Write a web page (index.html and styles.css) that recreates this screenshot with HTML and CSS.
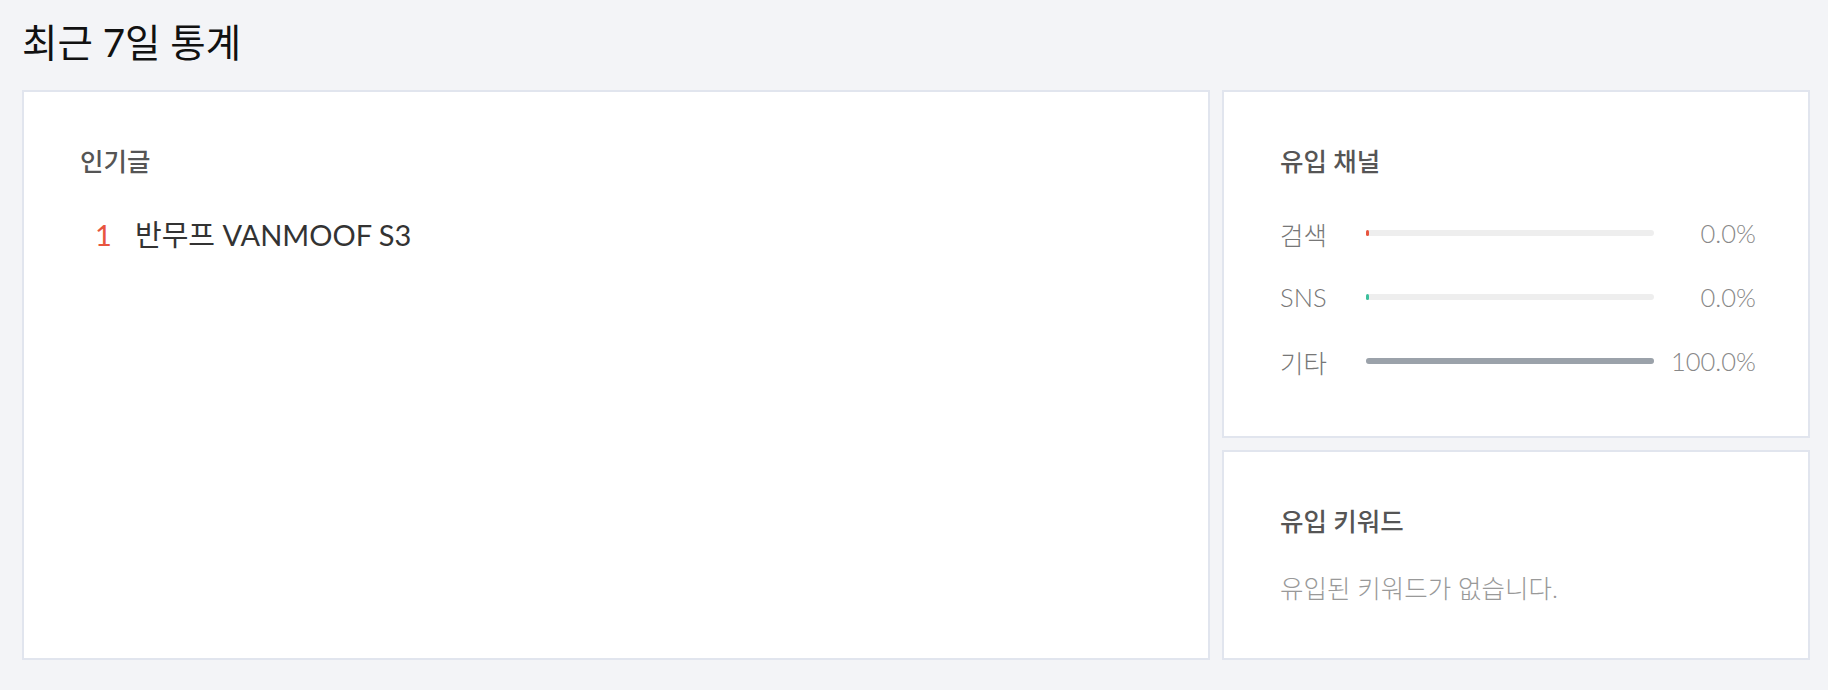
FILE: index.html
```html
<!DOCTYPE html>
<html lang="ko">
<head>
    <meta charset="UTF-8">
    <meta name="viewport" content="width=device-width, initial-scale=1.0">
    <title>최근 7일 통계</title>
    <link rel="stylesheet" href="styles.css">
</head>
<body>

<h1 class="page-title">최근 7일 통계</h1>

<div class="stats">
    <div class="card card-popular">
        <h2 class="card-title">인기글</h2>
        <ol class="popular-list">
            <li><span class="rank">1</span><span class="post">반무프 VANMOOF S3</span></li>
        </ol>
    </div>

    <div class="side">
        <div class="card">
            <h2 class="card-title">유입 채널</h2>
            <div class="channels">
                <div class="channel">
                    <span class="channel-name">검색</span>
                    <div class="bar"><div class="bar-fill fill-search" style="width: 0%"></div></div>
                    <span class="channel-value">0.0%</span>
                </div>
                <div class="channel">
                    <span class="channel-name">SNS</span>
                    <div class="bar"><div class="bar-fill fill-sns" style="width: 0%"></div></div>
                    <span class="channel-value">0.0%</span>
                </div>
                <div class="channel">
                    <span class="channel-name">기타</span>
                    <div class="bar"><div class="bar-fill fill-etc" style="width: 100%"></div></div>
                    <span class="channel-value">100.0%</span>
                </div>
            </div>
        </div>

        <div class="card">
            <h2 class="card-title">유입 키워드</h2>
            <p class="empty">유입된 키워드가 없습니다.</p>
        </div>
    </div>
</div>

</body>
</html>
```

FILE: styles.css
```css
body {
    font-family: Lato, "Noto Sans CJK KR", sans-serif;
    margin: 0;
    padding: 20px 18px 0 22px;
    background-color: #f3f4f7;
    color: #111;
}
.page-title {
    margin: 0 0 26px 0;
    font-size: 38.5px;
    line-height: 44px;
    font-weight: 400;
    color: #111;
}
.stats {
    display: grid;
    grid-template-columns: 1fr 588px;
    gap: 12px;
}
.side {
    display: flex;
    flex-direction: column;
    gap: 12px;
}
.card {
    background-color: #fff;
    border: 2px solid #e1e5ee;
    padding: 56px 52px 56px 56px;
}
.card-title {
    margin: 0 0 40px 0;
    font-size: 25.5px;
    line-height: 26px;
    font-weight: 500;
    color: #555;
}

/* Popular posts */
.popular-list {
    list-style: none;
    margin: 0;
    padding: 0;
}
.popular-list li {
    display: flex;
    font-size: 29px;
    line-height: 34px;
    font-weight: 400;
    color: #333;
    margin-top: 52px;
}
.popular-list li:first-child {
    margin-top: 0;
}
.rank {
    width: 40px;
    padding-left: 15px;
    color: #e8553f;
}
.card-popular .card-title {
    margin-bottom: 44px;
}

/* Channels */
.channels {
    display: flex;
    flex-direction: column;
    gap: 26px;
}
.channel {
    display: grid;
    grid-template-columns: 86px 1fr 102px;
    align-items: center;
    height: 38px;
    font-size: 25.5px;
    font-weight: 300;
}
.channel-name {
    color: #777;
}
.channel-value {
    text-align: right;
    color: #888;
}
.bar {
    height: 6px;
    border-radius: 3px;
    background-color: #eeeeee;
}
.bar-fill {
    height: 100%;
    min-width: 3px;
    border-radius: 3px;
}
.fill-search {
    background-color: #e8553f;
}
.fill-sns {
    background-color: #3cbf9c;
}
.fill-etc {
    background-color: #9ba2aa;
}

.empty {
    margin: 0;
    font-size: 25.5px;
    line-height: 28px;
    font-weight: 300;
    color: #999;
}
```
